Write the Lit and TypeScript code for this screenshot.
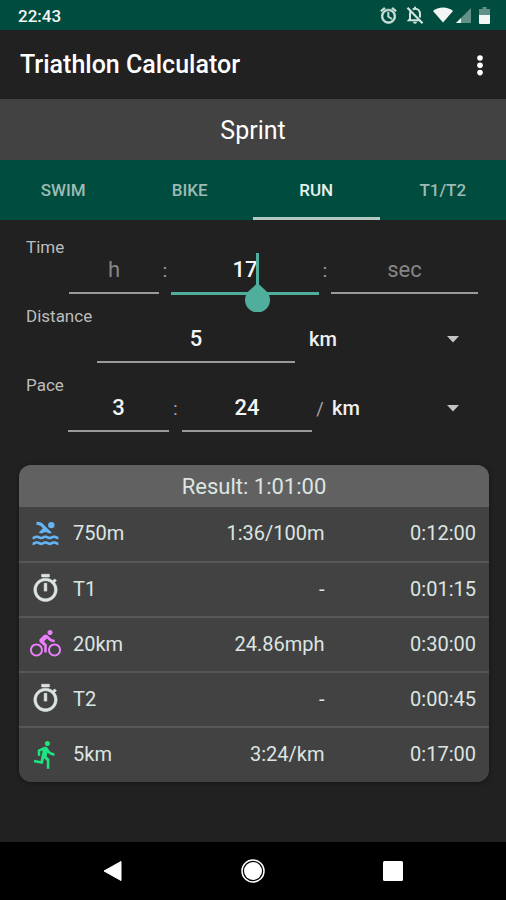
import { LitElement, html, css, svg } from "lit";
import { customElement, state } from "lit/decorators.js";
import { classMap } from "lit/directives/class-map.js";

const POOL =
  "M22 21c-1.11 0-1.73-.37-2.18-.64-.37-.22-.6-.36-1.15-.36-.56 0-.78.13-1.15.36-.46.27-1.07.64-2.18.64s-1.73-.37-2.18-.64c-.37-.22-.6-.36-1.15-.36-.56 0-.78.13-1.15.36-.46.27-1.08.64-2.19.64-1.11 0-1.73-.37-2.18-.64-.37-.23-.6-.36-1.15-.36s-.78.13-1.15.36c-.46.27-1.08.64-2.19.64v-2c.56 0 .78-.13 1.15-.36.46-.27 1.08-.64 2.19-.64s1.73.37 2.18.64c.37.23.59.36 1.15.36.56 0 .78-.13 1.15-.36.46-.27 1.08-.64 2.19-.64 1.11 0 1.73.37 2.18.64.37.22.6.36 1.15.36s.78-.13 1.15-.36c.45-.27 1.07-.64 2.18-.64s1.73.37 2.18.64c.37.23.59.36 1.15.36v2zm0-4.5c-1.11 0-1.73-.37-2.18-.64-.37-.22-.6-.36-1.15-.36-.56 0-.78.13-1.15.36-.45.27-1.07.64-2.18.64s-1.73-.37-2.18-.64c-.37-.22-.6-.36-1.15-.36-.56 0-.78.13-1.15.36-.45.27-1.07.64-2.18.64s-1.73-.37-2.18-.64c-.37-.22-.6-.36-1.15-.36s-.78.13-1.15.36c-.47.27-1.09.64-2.2.64v-2c.56 0 .78-.13 1.15-.36.45-.27 1.07-.64 2.18-.64s1.73.37 2.18.64c.37.22.6.36 1.15.36.56 0 .78-.13 1.15-.36.45-.27 1.07-.64 2.18-.64s1.73.37 2.18.64c.37.22.6.36 1.15.36s.78-.13 1.15-.36c.45-.27 1.07-.64 2.18-.64s1.73.37 2.18.64c.37.22.6.36 1.15.36v2zM8.67 12c.56 0 .78-.13 1.15-.36.46-.27 1.08-.64 2.19-.64 1.11 0 1.73.37 2.18.64.37.22.6.36 1.15.36s.78-.13 1.15-.36c.12-.07.26-.15.41-.23L10.48 5C8.93 3.45 7.5 2.99 5 3v2.5c1.82-.01 2.89.39 4 1.5l1 1-3.25 3.25c.31.12.56.27.77.39.37.23.59.36 1.15.36zM16.5 3a2.5 2.5 0 1 0 0 5 2.5 2.5 0 0 0 0-5z";
const TIMER =
  "M15 1H9v2h6V1zm-4 13h2V8h-2v6zm8.03-6.61l1.42-1.42c-.43-.51-.9-.99-1.41-1.41l-1.42 1.42C16.07 4.74 14.12 4 12 4c-4.97 0-9 4.03-9 9s4.02 9 9 9 9-4.03 9-9c0-2.12-.74-4.07-1.97-5.61zM12 20c-3.87 0-7-3.13-7-7s3.13-7 7-7 7 3.13 7 7-3.13 7-7 7z";
const CYCLIST =
  "M15.5 5.5c1.1 0 2-.9 2-2s-.9-2-2-2-2 .9-2 2 .9 2 2 2zM5 12c-2.8 0-5 2.2-5 5s2.2 5 5 5 5-2.2 5-5-2.2-5-5-5zm0 8.5c-1.9 0-3.5-1.6-3.5-3.5s1.6-3.5 3.5-3.5 3.5 1.6 3.5 3.5-1.6 3.5-3.5 3.5zm5.8-10l2.4-2.4.8.8c1.3 1.3 3 2.1 5.1 2.1V9c-1.5 0-2.7-.6-3.6-1.5l-1.9-1.9c-.5-.4-1-.6-1.6-.6s-1.1.2-1.4.6L7.8 8.4c-.4.4-.6.9-.6 1.4 0 .6.2 1.1.6 1.4L11 14v5h2v-6.2l-2.2-2.3zM19 12c-2.8 0-5 2.2-5 5s2.2 5 5 5 5-2.2 5-5-2.2-5-5-5zm0 8.5c-1.9 0-3.5-1.6-3.5-3.5s1.6-3.5 3.5-3.5 3.5 1.6 3.5 3.5-1.6 3.5-3.5 3.5z";
const RUNNER =
  "M13.49 5.48c1.1 0 2-.9 2-2s-.9-2-2-2-2 .9-2 2 .9 2 2 2zm-3.6 13.9l1-4.4 2.1 2v6h2v-7.5l-2.1-2 .6-3c1.3 1.5 3.3 2.5 5.5 2.5v-2c-1.9 0-3.5-1-4.3-2.4l-1-1.6c-.4-.6-1-1-1.7-1-.3 0-.5.1-.8.1l-5.2 2.2v4.7h2v-3.4l1.8-.7-1.6 8.1-4.9-1-.4 2 7 1.4z";
const ALARM =
  "M22 5.72l-4.6-3.86-1.29 1.53 4.6 3.86L22 5.72zM7.88 3.39L6.6 1.86 2 5.71l1.29 1.53 4.59-3.85zM12.5 8H11v6l4.75 2.85.75-1.23-4-2.37V8zM12 4c-4.97 0-9 4.03-9 9s4.02 9 9 9c4.97 0 9-4.03 9-9s-4.03-9-9-9zm0 16c-3.87 0-7-3.13-7-7s3.13-7 7-7 7 3.13 7 7-3.13 7-7 7z";

interface Leg {
  icon: string;
  tone: string;
  name: string;
  pace: string;
  time: string;
}

const LEGS: Leg[] = [
  { icon: POOL, tone: "swim", name: "750m", pace: "1:36/100m", time: "0:12:00" },
  { icon: TIMER, tone: "plain", name: "T1", pace: "-", time: "0:01:15" },
  { icon: CYCLIST, tone: "bike", name: "20km", pace: "24.86mph", time: "0:30:00" },
  { icon: TIMER, tone: "plain", name: "T2", pace: "-", time: "0:00:45" },
  { icon: RUNNER, tone: "run", name: "5km", pace: "3:24/km", time: "0:17:00" },
];

const TABS = ["SWIM", "BIKE", "RUN", "T1/T2"];

@customElement("status-bar")
class StatusBar extends LitElement {
  static styles = css`
    :host {
      display: flex;
      align-items: center;
      justify-content: space-between;
      height: 30px;
      padding: 0 16px 0 18px;
      background: #004d40;
      color: #f2f7f5;
      font-size: 17px;
      font-weight: 500;
    }
    .clock {
      padding-top: 2px;
    }
    .icons {
      display: flex;
      align-items: center;
    }
    svg {
      display: block;
      fill: currentColor;
    }
    .soft {
      color: #d3e3dd;
    }
    .alarm {
      margin-right: 8px;
    }
    .bell {
      margin-right: 9px;
    }
    .wifi {
      margin-right: 3px;
    }
    .signal {
      margin-right: 8px;
    }
  `;
  render() {
    return html`
      <span class="clock">22:43</span>
      <div class="icons">
        <svg class="soft alarm" width="19" height="19" viewBox="0 0 24 24"><path d=${ALARM} stroke="currentColor" stroke-width=".9" /></svg>
        <svg class="soft bell" width="18" height="19" viewBox="0 0 18 19">
          <path d="M4.5 5.5C4 6.5 4 7.5 4 8.5v4.300L2.800 14.300h10.400M6.700 3.400C7.500 3 8.200 2.800 9 2.800c3 0 5 2.200 5 5.400v3.200M9 .8v2" fill="none" stroke="currentColor" stroke-width="2" />
          <path d="M7 15.700h4a2 2 0 0 1-4 0z" />
          <path d="M1.5 1.800L16.5 17.200" stroke="currentColor" stroke-width="2.200" />
        </svg>
        <svg class="wifi" width="20" height="17" viewBox="0 0 20 17"><path d="M0 4C2.500 1.700 6 .5 10 .5s7.500 1.200 10 3.500L10 15.500z" /></svg>
        <svg class="signal" width="15" height="17" viewBox="0 0 15 17">
          <path d="M15 1v15H0z" opacity=".4" />
          <path d="M5 11v5H0z" />
        </svg>
        <svg width="11" height="17" viewBox="0 0 11 17">
          <path d="M3.500 0h4v2H11v6H0V2h3.500z" opacity=".4" />
          <path d="M0 8h11v8a1 1 0 0 1-1 1H1a1 1 0 0 1-1-1z" />
        </svg>
      </div>
    `;
  }
}

@customElement("result-card")
class ResultCard extends LitElement {
  static styles = css`
    :host {
      display: block;
      margin: 33px 17px 0 19px;
      border-radius: 12px;
      overflow: hidden;
      background: #424242;
      box-shadow: 0 1px 4px #161616;
      color: #dde5e2;
    }
    table {
      width: 100%;
      border-collapse: collapse;
      table-layout: fixed;
      font-size: 20px;
    }
    .c-icon {
      width: 54px;
    }
    .c-pace {
      width: 40%;
    }
    .c-time {
      width: 35%;
    }
    .head {
      height: 42px;
      padding: 0;
      background: #616161;
      font-size: 22px;
      font-weight: 400;
      text-align: center;
    }
    td,
    .name {
      height: 55px;
      padding: 0 0 2px;
      box-sizing: border-box;
      font-weight: 400;
      text-align: left;
    }
    tr + tr td,
    tr + tr .name {
      border-top: 2px solid #575757;
    }
    .num {
      text-align: right;
    }
    .time {
      padding-right: 13px;
    }
    svg {
      display: block;
      margin-left: 11px;
      fill: currentColor;
    }
    .plain svg {
      stroke: currentColor;
      stroke-width: 0.5px;
    }
    .swim {
      color: #64b5f6;
    }
    .bike {
      color: #ea80fc;
    }
    .run {
      color: #1fe281;
    }
  `;
  render() {
    return html`
      <table>
        <colgroup>
          <col class="c-icon" />
          <col />
          <col class="c-pace" />
          <col class="c-time" />
        </colgroup>
        <thead>
          <tr>
            <th class="head" colspan="4">Result: 1:01:00</th>
          </tr>
        </thead>
        <tbody>
          ${LEGS.map(
            (leg) => html`
              <tr>
                <td class=${leg.tone}>
                  <svg width="31" height="31" viewBox="0 0 24 24" aria-hidden="true">${svg`<path d=${leg.icon} />`}</svg>
                </td>
                <th class="name" scope="row">${leg.name}</th>
                <td class="num">${leg.pace}</td>
                <td class="num time">${leg.time}</td>
              </tr>
            `,
          )}
        </tbody>
      </table>
    `;
  }
}

@customElement("app-root")
class AppRoot extends LitElement {
  @state() private tab = "RUN";

  static styles = css`
    :host {
      display: flex;
      flex-direction: column;
      min-height: 100vh;
      background: #212121;
      color: #fff;
      font-family: Roboto, "Noto Sans", sans-serif;
    }
    button,
    input,
    select {
      margin: 0;
      padding: 0;
      border: 0;
      border-radius: 0;
      outline: 0;
      background: none;
      color: inherit;
      font: inherit;
    }
    svg {
      display: block;
      fill: currentColor;
    }
    .appbar {
      display: flex;
      align-items: center;
      justify-content: space-between;
      height: 69px;
      padding: 0 16px 0 20px;
    }
    h1 {
      margin: 0;
      font-size: 25px;
      font-weight: 500;
    }
    .race {
      height: 61px;
      padding-top: 2px;
      background: #424242;
      font-size: 25px;
      text-align: center;
    }
    .tabs {
      display: grid;
      grid-template-columns: repeat(4, 1fr);
      height: 60px;
      background: #004d40;
    }
    .tab {
      border-top: 3px solid transparent;
      border-bottom: 3px solid transparent;
      color: #9dbbb2;
      font-size: 17px;
      font-weight: 500;
    }
    .tab.on {
      border-bottom-color: #b5c9c3;
      color: #e4f1ed;
    }
    main {
      flex: 1;
      padding-bottom: 20px;
    }
    fieldset {
      min-width: 0;
      margin: 0;
      padding: 0;
      border: 0;
    }
    .form {
      display: flex;
      flex-direction: column;
      gap: 14px;
      padding: 19px 28px 0 26px;
    }
    .label {
      display: block;
      height: 16px;
      padding: 0;
      color: #bdbdbd;
      font-size: 17px;
      line-height: 16px;
    }
    .row {
      display: grid;
      height: 39px;
    }
    .time {
      margin-left: 43px;
      grid-template-columns: 90fr 12px 148fr 12px 147fr;
    }
    .distance {
      margin-left: 71px;
      grid-template-columns: 198fr 14px 169fr;
    }
    .pace {
      margin-left: 42px;
      grid-template-columns: 101fr 13px 130fr 20px 146fr;
    }
    .field {
      position: relative;
      display: grid;
    }
    input {
      width: 100%;
      min-width: 0;
      box-sizing: border-box;
      height: 39px;
      padding-bottom: 8px;
      border-bottom: 2px solid #9a9a9a;
      color: #f5f5f5;
      font-size: 22px;
      font-weight: 500;
      text-align: center;
    }
    input::placeholder {
      color: #858585;
      font-weight: 400;
      opacity: 1;
    }
    .active input {
      border-bottom: 3px solid #4fae9c;
      height: 40px;
    }
    .caret {
      position: absolute;
      left: calc(50% + 11px);
      top: -2px;
      width: 3px;
      height: 34px;
      background: #4fae9c;
    }
    .handle {
      position: absolute;
      left: 50%;
      top: 26px;
      color: #4fae9c;
    }
    .sep {
      color: #a8a8a8;
      font-size: 18px;
      line-height: 32px;
      text-align: center;
    }
    .slash {
      padding-right: 4px;
    }
    .pick {
      display: grid;
      align-items: center;
      height: 30px;
    }
    .pick > * {
      grid-area: 1 / 1;
    }
    select {
      width: 100%;
      height: 30px;
      appearance: none;
      color: #f0f0f0;
      font-size: 20px;
      font-weight: 500;
    }
    .arrow {
      justify-self: end;
      margin-right: 19px;
      color: #c4c4c4;
      pointer-events: none;
    }
    nav {
      display: grid;
      grid-template-columns: repeat(3, 1fr);
      height: 58px;
      padding: 0 43px;
      background: #000;
    }
    nav button {
      display: grid;
      place-items: center;
    }
  `;

  private unit(label: string) {
    return html`
      <div class="pick">
        <select aria-label=${label}>
          <option>km</option>
          <option>mi</option>
        </select>
        <svg class="arrow" width="12" height="7" viewBox="0 0 12 7" aria-hidden="true"><path d="M0 0h12L6 6.500z" /></svg>
      </div>
    `;
  }

  render() {
    return html`
      <status-bar></status-bar>
      <header class="appbar">
        <h1>Triathlon Calculator</h1>
        <button aria-label="More options">
          <svg width="20" height="22" viewBox="0 0 20 22">
            <circle cx="10" cy="4" r="2.800" />
            <circle cx="10" cy="11.300" r="2.800" />
            <circle cx="10" cy="18.600" r="2.800" />
          </svg>
        </button>
      </header>
      <button class="race">Sprint</button>
      <div class="tabs" role="tablist">
        ${TABS.map(
          (t) => html`<button
            role="tab"
            class=${classMap({ tab: true, on: t === this.tab })}
            aria-selected=${t === this.tab ? "true" : "false"}
            @click=${() => (this.tab = t)}
          >${t}</button>`,
        )}
      </div>
      <main>
        <form class="form">
          <fieldset>
            <legend class="label">Time</legend>
            <div class="row time">
              <div class="field"><input aria-label="Hours" placeholder="h" inputmode="numeric" /></div>
              <span class="sep">:</span>
              <div class="field active">
                <input aria-label="Minutes" .value=${"17"} inputmode="numeric" />
                <span class="caret"></span>
                <svg class="handle" width="26" height="31" viewBox="0 0 26 31" aria-hidden="true">
                  <path d="M12.500 2L21.200 10A12.500 12.500 0 1 1 3.800 10z" />
                </svg>
              </div>
              <span class="sep">:</span>
              <div class="field"><input aria-label="Seconds" placeholder="sec" inputmode="numeric" /></div>
            </div>
          </fieldset>
          <div>
            <label class="label" for="distance">Distance</label>
            <div class="row distance">
              <input id="distance" .value=${"5"} inputmode="decimal" />
              <span></span>
              ${this.unit("Distance unit")}
            </div>
          </div>
          <fieldset>
            <legend class="label">Pace</legend>
            <div class="row pace">
              <input aria-label="Pace minutes" .value=${"3"} inputmode="numeric" />
              <span class="sep">:</span>
              <input aria-label="Pace seconds" .value=${"24"} inputmode="numeric" />
              <span class="sep slash">/</span>
              ${this.unit("Pace unit")}
            </div>
          </fieldset>
        </form>
        <result-card></result-card>
      </main>
      <nav>
        <button aria-label="Back">
          <svg width="20" height="22" viewBox="0 0 20 22"><path d="M18 1.500v19L1 11z" stroke="currentColor" stroke-linejoin="round" /></svg>
        </button>
        <button aria-label="Home">
          <svg width="24" height="24" viewBox="0 0 24 24">
            <circle cx="12" cy="12" r="11" fill="none" stroke="currentColor" stroke-width="1.500" />
            <circle cx="12" cy="12" r="9" />
          </svg>
        </button>
        <button aria-label="Recent apps">
          <svg width="20" height="20" viewBox="0 0 20 20"><rect width="20" height="20" rx="1.500" /></svg>
        </button>
      </nav>
    `;
  }
}
